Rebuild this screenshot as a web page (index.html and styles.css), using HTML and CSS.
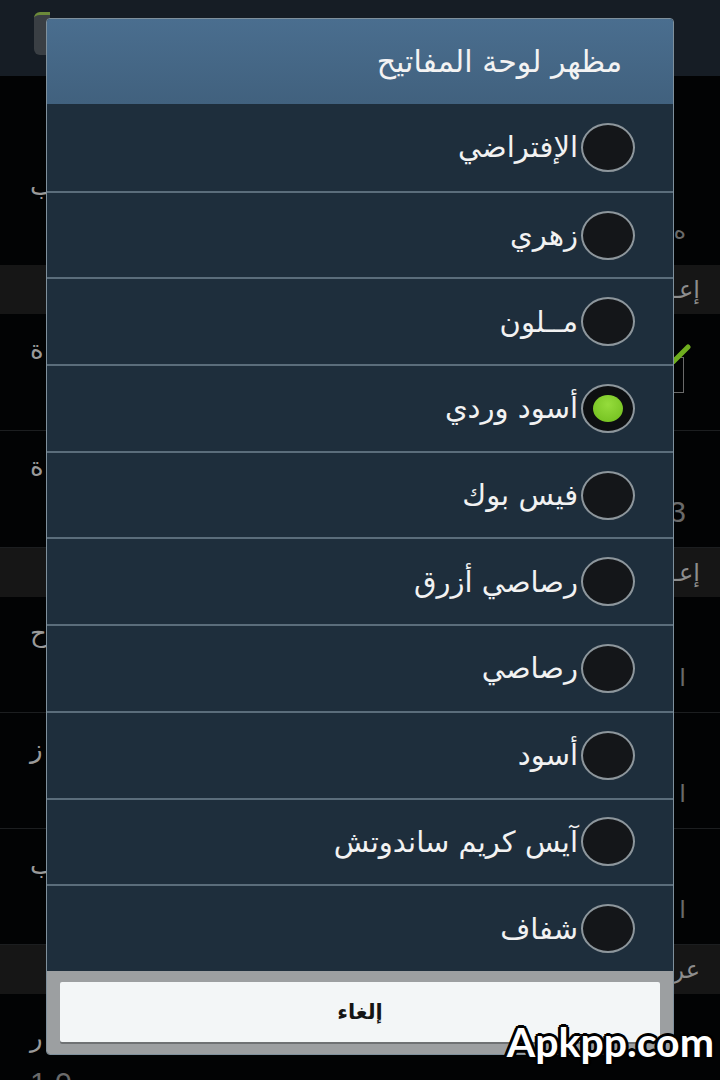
FILE: index.html
```html
<!DOCTYPE html>
<html lang="ar">
<head>
    <meta charset="UTF-8">
    <meta name="viewport" content="width=device-width, initial-scale=1.0">
    <title>مظهر لوحة المفاتيح</title>
    <link rel="stylesheet" href="styles.css">
</head>
<body>
    <div class="screen">
        <!-- settings screen behind the dialog -->
        <div class="appbar"><span class="app-icon"></span></div>

        <div class="pref pref-tall">
            <div class="pref-line"><span class="frag">ب</span><span></span></div>
            <div class="pref-line"><span></span><span class="frag frag-dim">ه</span></div>
        </div>
        <div class="section"><span>إعـ</span></div>
        <div class="pref">
            <div class="pref-line"><span class="frag">ة</span>
                <span class="checkbox">
                    <svg width="20" height="20" viewBox="0 0 20 20"><path d="M2 18 L17 3" stroke="#6fae1f" stroke-width="5" stroke-linecap="round"/></svg>
                </span>
            </div>
        </div>
        <div class="pref">
            <div class="pref-line"><span class="frag">ة</span><span></span></div>
            <div class="pref-line"><span></span><span class="frag frag-dim num">3</span></div>
        </div>
        <div class="section"><span>إعـ</span></div>
        <div class="pref pref-short">
            <div class="pref-line"><span class="frag">ح</span><span></span></div>
            <div class="pref-line"><span></span><span class="frag frag-dim">ا</span></div>
        </div>
        <div class="pref pref-short">
            <div class="pref-line"><span class="frag">ز</span><span></span></div>
            <div class="pref-line"><span></span><span class="frag frag-dim">ا</span></div>
        </div>
        <div class="pref pref-short">
            <div class="pref-line"><span class="frag">ب</span><span></span></div>
            <div class="pref-line"><span></span><span class="frag frag-dim">ا</span></div>
        </div>
        <div class="section"><span>عر</span></div>
        <div class="pref pref-last">
            <div class="pref-line"><span class="frag">ر</span><span></span></div>
            <div class="pref-line"><span class="frag frag-dim num">1.0</span><span></span></div>
        </div>

        <!-- the dialog -->
        <div class="dialog" dir="rtl">
            <div class="dialog-title">مظهر لوحة المفاتيح</div>
            <div class="options">
                <div class="option"><span class="radio"></span><span class="option-label">الإفتراضي</span></div>
                <div class="option"><span class="radio"></span><span class="option-label">زهري</span></div>
                <div class="option"><span class="radio"></span><span class="option-label">مــلون</span></div>
                <div class="option"><span class="radio checked"></span><span class="option-label">أسود وردي</span></div>
                <div class="option"><span class="radio"></span><span class="option-label">فيس بوك</span></div>
                <div class="option"><span class="radio"></span><span class="option-label">رصاصي أزرق</span></div>
                <div class="option"><span class="radio"></span><span class="option-label">رصاصي</span></div>
                <div class="option"><span class="radio"></span><span class="option-label">أسود</span></div>
                <div class="option"><span class="radio"></span><span class="option-label">آيس كريم ساندوتش</span></div>
                <div class="option"><span class="radio"></span><span class="option-label">شفاف</span></div>
            </div>
            <div class="dialog-buttons">
                <button class="btn-cancel">إلغاء</button>
            </div>
        </div>

        <div class="watermark">Apkpp.com</div>
    </div>
</body>
</html>
```

FILE: styles.css
```css
body { margin: 0; background: #020304; font-family: "DejaVu Sans", "Liberation Sans", sans-serif; }
.screen { position: relative; width: 720px; height: 1080px; overflow: hidden; }

.appbar { height: 76px; background: #161d25; padding: 12px 0 0 34px; box-sizing: border-box; }
.app-icon { display: block; width: 16px; height: 40px; border-radius: 6px 0 0 6px; background: #3a3f44; border-top: 3px solid #6c8a3a; }

.pref { box-sizing: border-box; height: 117px; border-bottom: 1px solid #1c1e20; padding: 16px 34px 0 30px; display: flex; flex-direction: column; }
.pref-tall { height: 189px; padding-top: 90px; border-bottom: none; }
.pref-short { height: 116px; }
.pref-last { border-bottom: none; padding-top: 24px; }
.pref-line { display: flex; justify-content: space-between; align-items: center; height: 40px; margin-bottom: 5px; }
.frag { color: #9a9a9a; font-size: 26px; }
.frag-dim { color: #6a6a6a; font-size: 24px; }
.num { font-family: "Liberation Sans", sans-serif; font-size: 30px; }

.section { height: 49px; background: #161616; display: flex; justify-content: flex-end; align-items: center; padding-right: 20px; color: #8d8d8d; font-size: 24px; }

.checkbox { position: relative; width: 36px; height: 34px; border: 1px solid #6a6a6a; margin-right: 2px; margin-top: 50px; }
.checkbox svg { position: absolute; right: -8px; top: -14px; }

.dialog { position: absolute; left: 46px; top: 18px; width: 628px; height: 1037px; box-sizing: border-box; border: 1px solid #7f909c; border-radius: 4px; background: #1e2e3c; overflow: hidden; display: flex; flex-direction: column; }
.dialog-title { height: 85px; flex: none; background: linear-gradient(#4a6e8f, #41617e); color: #f3f3f3; font-size: 30px; display: flex; align-items: center; padding-right: 51px; box-sizing: border-box; }

.options { flex: 1; display: flex; flex-direction: column; }
.option { height: 86.7px; box-sizing: border-box; display: flex; align-items: center; padding-right: 38px; gap: 3px; }
.option + .option { border-top: 2px solid #5b6d7b; }
.option-label { color: #f2f2f2; font-size: 29px; }

.radio { position: relative; flex: none; width: 50px; height: 45px; border: 2px solid #8d969c; border-radius: 50%; background: #141619; }
.radio.checked { background: #0d0f11; }
.radio.checked::after { content: ""; position: absolute; left: 10px; top: 9px; width: 30px; height: 27px; border-radius: 50%; background: radial-gradient(circle at 50% 35%, #95dc3c, #6fbc1c); }

.dialog-buttons { flex: none; height: 84px; background: #9c9fa1; padding: 11px 13px 0; box-sizing: border-box; }
.btn-cancel { display: block; width: 100%; height: 60px; border: none; border-radius: 2px; background: #f3f6f7; box-shadow: 0 2px 0 #6f7274; font-family: "DejaVu Sans", sans-serif; font-size: 21px; font-weight: bold; color: #151515; }

.watermark { position: absolute; right: 6px; bottom: 14px; font-family: Lato, sans-serif; font-weight: bold; font-size: 41px; color: #fff; text-shadow: -2px -2px 0 #000, 2px -2px 0 #000, -2px 2px 0 #000, 2px 2px 0 #000, 0 3px 0 #000, 0 -3px 0 #000, 3px 0 0 #000, -3px 0 0 #000; }
```
